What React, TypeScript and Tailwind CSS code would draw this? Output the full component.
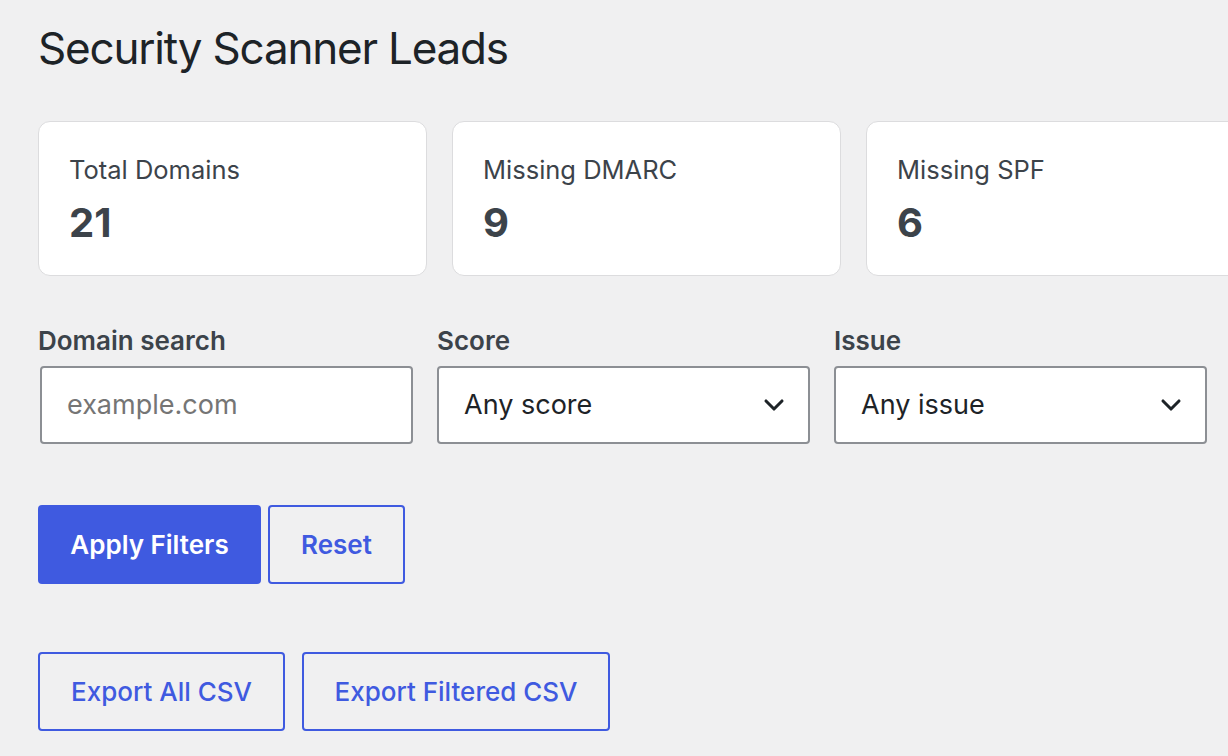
import { ChevronDown } from 'lucide-react';

const stats = [
  { label: 'Total Domains', value: '21' },
  { label: 'Missing DMARC', value: '9' },
  { label: 'Missing SPF', value: '6' },
];

function StatCard({ label, value }: { label: string; value: string }) {
  return (
    <div className="w-[389px] h-[155px] shrink-0 bg-white border border-[#dcdcde] rounded-[12px] px-[30px] pt-[30px]">
      <div className="text-[25.5px] leading-[36px] text-[#3c434a]">{label}</div>
      <div className="mt-[11px] text-[40px] leading-[48px] font-bold text-[#3c434a]">{value}</div>
    </div>
  );
}

function Select({ value }: { value: string }) {
  return (
    <div className="w-[373px] h-[78px] bg-white border-2 border-[#8c8f94] rounded-[4px] flex items-center justify-between pl-[25px] pr-[18px]">
      <span className="text-[27px] text-[#1d2327]">{value}</span>
      <ChevronDown className="w-[32px] h-[32px] text-[#1d2327]" strokeWidth={2.3} />
    </div>
  );
}

export default function App() {
  return (
    <div
      className="min-h-[756px] bg-[#f0f0f1] pl-[38px] pt-[21px] overflow-hidden"
      style={{ fontFamily: 'Inter, "Noto Sans", sans-serif' }}
    >
      <h1 className="text-[44px] leading-[55px] tracking-[-1.2px] text-[#1d2327] font-normal">Security Scanner Leads</h1>

      <div className="mt-[45px] flex gap-[25px]">
        {stats.map((s) => (
          <StatCard key={s.label} label={s.label} value={s.value} />
        ))}
      </div>

      <div className="mt-[47px] flex gap-[24px]">
        <div className="flex flex-col gap-[7px]">
          <label className="text-[26px] leading-[36px] font-semibold text-[#3c434a]">Domain search</label>
          <div className="ml-[2px] w-[373px] h-[78px] bg-white border-2 border-[#8c8f94] rounded-[4px] flex items-center pl-[25px]">
            <span className="text-[27px] text-[#757575]">example.com</span>
          </div>
        </div>
        <div className="flex flex-col gap-[7px]">
          <label className="text-[26px] leading-[36px] font-semibold text-[#3c434a]">Score</label>
          <Select value="Any score" />
        </div>
        <div className="flex flex-col gap-[7px]">
          <label className="text-[26px] leading-[36px] font-semibold text-[#3c434a]">Issue</label>
          <Select value="Any issue" />
        </div>
      </div>

      <div className="mt-[61px] flex gap-[7px]">
        <button className="w-[223px] h-[79px] bg-[#3f5ae0] rounded-[4px] text-white text-[26px] font-semibold">
          Apply Filters
        </button>
        <button className="w-[137px] h-[79px] border-2 border-[#3f5ae0] rounded-[4px] text-[#3f5ae0] text-[26px] font-semibold">
          Reset
        </button>
      </div>

      <div className="mt-[68px] flex gap-[17px]">
        <button className="w-[247px] h-[79px] border-2 border-[#3f5ae0] rounded-[4px] text-[#3f5ae0] text-[26px] font-medium">
          Export All CSV
        </button>
        <button className="w-[308px] h-[79px] border-2 border-[#3f5ae0] rounded-[4px] text-[#3f5ae0] text-[26px] font-medium">
          Export Filtered CSV
        </button>
      </div>
    </div>
  );
}
